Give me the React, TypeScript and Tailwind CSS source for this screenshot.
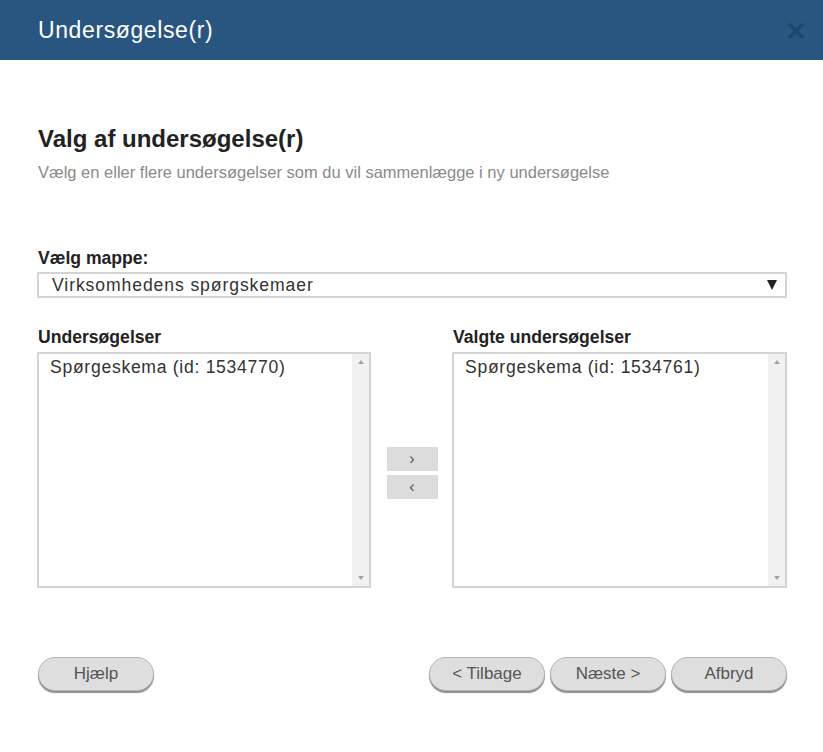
import React, { useState } from "react";

const font = { fontFamily: '"Liberation Sans", Arial, sans-serif' };

const ScrollTrack = () => (
  <div className="flex w-[17px] shrink-0 flex-col items-center justify-between bg-[#f1f1f1] py-[6px]">
    <span className="h-0 w-0 border-x-[3.5px] border-b-[4px] border-x-transparent border-b-[#a3a3a3]" />
    <span className="h-0 w-0 border-x-[3.5px] border-t-[4px] border-x-transparent border-t-[#a3a3a3]" />
  </div>
);

const ListBox = ({ items }: { items: string[] }) => (
  <div className="flex h-[236px] border-2 border-[#d4d4d4] bg-white">
    <ul className="flex-1 pl-[11px] pt-[2px] text-[17.6px] leading-[22px] tracking-[0.7px] text-[#333]">
      {items.map((item) => (
        <li key={item}>{item}</li>
      ))}
    </ul>
    <ScrollTrack />
  </div>
);

const PillButton = ({ label, className = "" }: { label: string; className?: string }) => (
  <button
    className={
      "h-[34px] w-[116px] rounded-full border border-[#b4b4b4] bg-[#dedede] text-[17px] text-[#555] shadow-[0_2px_1px_#8c8c8c] " +
      className
    }
  >
    {label}
  </button>
);

export default function App() {
  const [folder] = useState("Virksomhedens spørgskemaer");
  const available = ["Spørgeskema (id: 1534770)"];
  const chosen = ["Spørgeskema (id: 1534761)"];

  return (
    <div className="min-h-screen w-[823px] bg-white" style={font}>
      {/* Header */}
      <div className="flex h-[60px] items-center justify-between bg-[#285680] pl-[38px] pr-[18px]">
        <h1 className="text-[23px] tracking-[0.6px] text-white">Undersøgelse(r)</h1>
        <svg width="18" height="16" viewBox="0 0 18 16" className="mt-[1px]">
          <path d="M3 2 L15 14 M15 2 L3 14" stroke="#1c4064" strokeWidth="3.2" strokeLinecap="square" opacity="0.75" />
        </svg>
      </div>

      <div className="pl-[37px] pr-[36px]">
        {/* Intro */}
        <div className="pl-[1px] pt-[65px]">
          <h2 className="text-[24px] font-bold leading-[28px] text-[#222]">Valg af undersøgelse(r)</h2>
          <p className="mt-[9px] text-[16.5px] leading-[20px] text-[#8a8a8a]">
            Vælg en eller flere undersøgelser som du vil sammenlægge i ny undersøgelse
          </p>
        </div>

        {/* Folder select */}
        <div className="mt-[65px]">
          <label className="block pl-[1px] text-[17.6px] font-bold leading-[22px] text-[#222]">Vælg mappe:</label>
          <div className="mt-[3px] flex h-[26px] items-center justify-between border-2 border-[#d4d4d4] pl-[13px] pr-[8px]">
            <span className="text-[17.6px] tracking-[0.9px] text-[#333]">{folder}</span>
            <span className="h-0 w-0 border-x-[5px] border-t-[10px] border-x-transparent border-t-[#222]" />
          </div>
        </div>

        {/* Lists */}
        <div className="mt-[28px] grid grid-cols-[334px_1fr_335px]">
          <div>
            <div className="pl-[1px] text-[17.6px] font-bold leading-[22px] text-[#222]">Undersøgelser</div>
            <div className="mt-[4px]">
              <ListBox items={available} />
            </div>
          </div>

          <div className="flex flex-col items-center justify-center gap-[4px] pt-[32px] pl-[1px]">
            <button className="flex h-[24px] w-[51px] items-center justify-center bg-[#dcdcdc] text-[16px] text-[#555]">
              ›
            </button>
            <button className="flex h-[24px] w-[51px] items-center justify-center bg-[#dcdcdc] text-[16px] text-[#555]">
              ‹
            </button>
          </div>

          <div>
            <div className="pl-[1px] text-[17.6px] font-bold leading-[22px] text-[#222]">Valgte undersøgelser</div>
            <div className="mt-[4px]">
              <ListBox items={chosen} />
            </div>
          </div>
        </div>

        {/* Footer buttons */}
        <div className="mt-[69px] flex items-center justify-between pl-[1px]">
          <PillButton label="Hjælp" />
          <div className="flex gap-[5px]">
            <PillButton label="< Tilbage" />
            <PillButton label="Næste >" />
            <PillButton label="Afbryd" />
          </div>
        </div>
      </div>
    </div>
  );
}
